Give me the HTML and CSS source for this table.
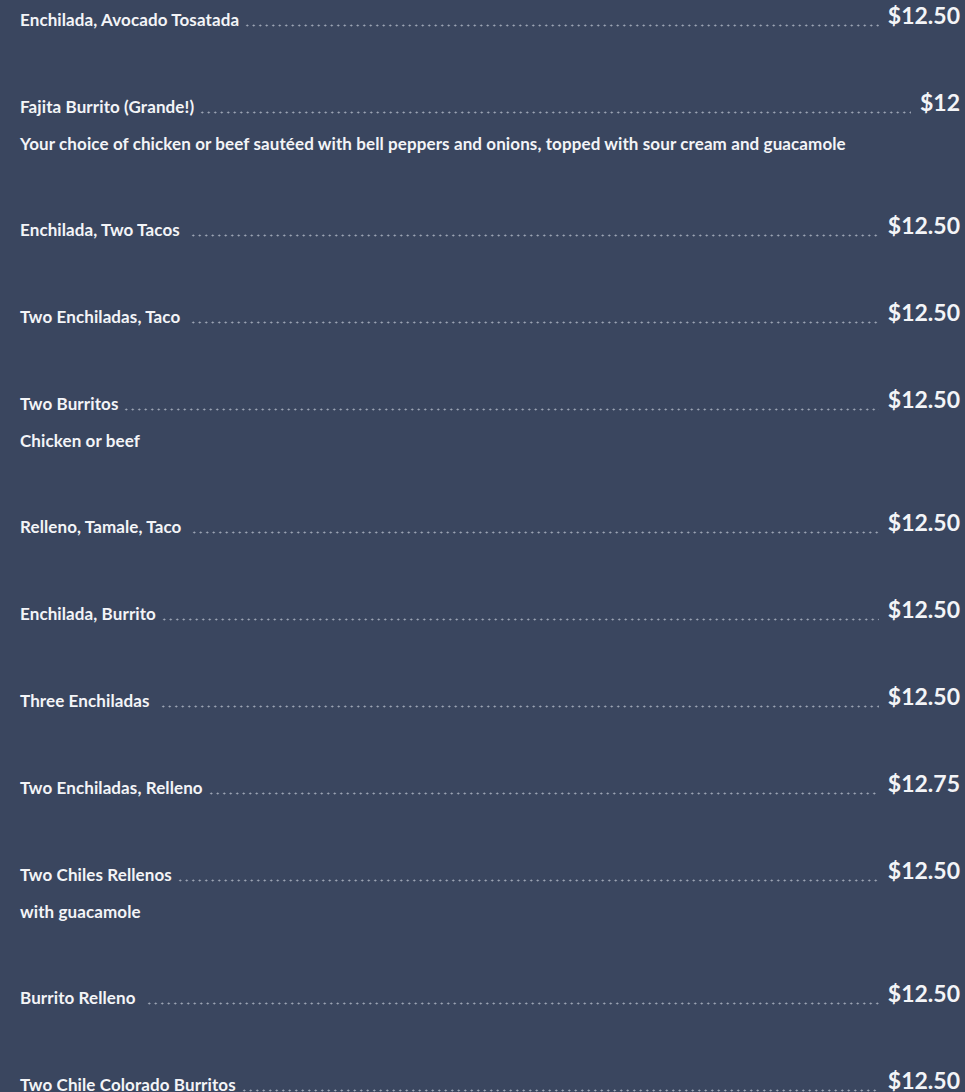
FILE: index.html
```html
<!DOCTYPE html>
<html>
<head>
<meta charset="utf-8">
<link rel="stylesheet" href="styles.css">
</head>
<body>
<div class="menu">
  <div class="item"><div class="row"><span class="name">Enchilada, Avocado Tosatada</span><span class="leader"></span><span class="price">$12.50</span></div></div>
  <div class="item"><div class="row"><span class="name">Fajita Burrito (Grande!)</span><span class="leader"></span><span class="price">$12</span></div><div class="desc">Your choice of chicken or beef sautéed with bell peppers and onions, topped with sour cream and guacamole</div></div>
  <div class="item"><div class="row"><span class="name">Enchilada, Two Tacos</span><span class="leader gap"></span><span class="price">$12.50</span></div></div>
  <div class="item"><div class="row"><span class="name">Two Enchiladas, Taco</span><span class="leader gap"></span><span class="price">$12.50</span></div></div>
  <div class="item"><div class="row"><span class="name">Two Burritos</span><span class="leader"></span><span class="price">$12.50</span></div><div class="desc">Chicken or beef</div></div>
  <div class="item"><div class="row"><span class="name">Relleno, Tamale, Taco</span><span class="leader gap"></span><span class="price">$12.50</span></div></div>
  <div class="item"><div class="row"><span class="name">Enchilada, Burrito</span><span class="leader"></span><span class="price">$12.50</span></div></div>
  <div class="item"><div class="row"><span class="name">Three Enchiladas</span><span class="leader gap"></span><span class="price">$12.50</span></div></div>
  <div class="item"><div class="row"><span class="name">Two Enchiladas, Relleno</span><span class="leader"></span><span class="price">$12.75</span></div></div>
  <div class="item"><div class="row"><span class="name">Two Chiles Rellenos</span><span class="leader"></span><span class="price">$12.50</span></div><div class="desc">with guacamole</div></div>
  <div class="item"><div class="row"><span class="name">Burrito Relleno</span><span class="leader gap"></span><span class="price">$12.50</span></div></div>
  <div class="item"><div class="row"><span class="name">Two Chile Colorado Burritos</span><span class="leader"></span><span class="price">$12.50</span></div></div>
</div>
</body>
</html>
```

FILE: styles.css
```css
html, body {
  margin: 0;
  padding: 0;
  background: #3a465f;
}
body {
  font-family: Lato, "Open Sans", sans-serif;
  color: #f3f4f7;
  overflow: hidden;
}
.menu {
  padding: 3px 5px 0 20px;
}
.item {
  margin-bottom: 51px;
}
.row {
  display: flex;
  align-items: baseline;
  height: 36px;
}
.name {
  font-size: 17px;
  font-weight: 700;
  letter-spacing: 0.1px;
  white-space: nowrap;
}
.leader {
  flex: 1;
  height: 3px;
  margin: 0 9px 0 5px;
  transform: translateY(1px);
  background-image: radial-gradient(circle, rgba(200, 206, 218, 0.75) 0.8px, transparent 1.2px);
  background-size: 6.5px 3px;
  background-repeat: repeat-x;
  background-position: 0 0;
}
.leader.gap {
  margin-left: 10px;
}
.price {
  font-size: 23px;
  font-weight: 700;
  white-space: nowrap;
  transform: translateY(-2px);
}
.desc {
  font-size: 17px;
  font-weight: 700;
  letter-spacing: 0.1px;
  line-height: 36px;
}
```
